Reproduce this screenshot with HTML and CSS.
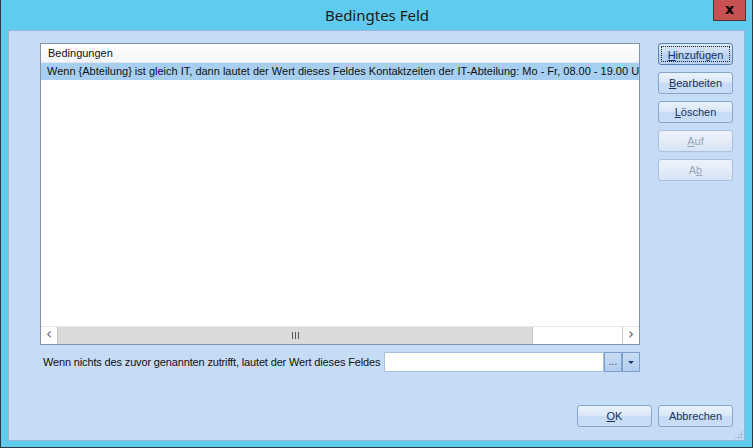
FILE: index.html
```html
<!DOCTYPE html>
<html lang="de">
<head>
  <meta charset="UTF-8">
  <title>Bedingtes Feld</title>
  <link rel="stylesheet" href="styles.css">
</head>
<body>
  <div class="window">
    <div class="titlebar">
      <span></span>
      <span class="title">Bedingtes Feld</span>
      <button class="close">x</button>
    </div>

    <div class="client">
      <div class="main">
        <div class="left">
          <div class="list">
            <div class="list-head">Bedingungen</div>
            <div class="list-row selected">Wenn {Abteilung} ist gleich IT, dann lautet der Wert dieses Feldes Kontaktzeiten der IT-Abteilung: Mo - Fr, 08.00 - 19.00 Uhr</div>
            <div class="list-body"></div>
            <div class="hscroll">
              <div class="arrow">&lsaquo;</div>
              <div class="thumb"><span class="grip"></span></div>
              <div class="track"></div>
              <div class="arrow right">&rsaquo;</div>
            </div>
          </div>

          <div class="field-row">
            <label class="field-label">Wenn nichts des zuvor genannten zutrifft, lautet der Wert dieses Feldes</label>
            <input type="text" class="field-input">
            <button class="mini">...</button>
            <button class="mini"><span class="caret"></span></button>
          </div>
        </div>

        <div class="side">
          <button class="btn default"><span class="focus"><u>H</u>inzufügen</span></button>
          <button class="btn"><u>B</u>earbeiten</button>
          <button class="btn"><u>L</u>öschen</button>
          <button class="btn" disabled><u>A</u>uf</button>
          <button class="btn" disabled>A<u>b</u></button>
        </div>
      </div>

      <div class="footer">
        <button class="btn"><u>O</u>K</button>
        <button class="btn">Abbrechen</button>
      </div>

      <div class="sizegrip"></div>
    </div>
  </div>
</body>
</html>
```

FILE: styles.css
```css
body {
  margin: 0;
  background: #fff;
}

.window {
  width: 753px;
  height: 448px;
  box-sizing: border-box;
  display: flex;
  flex-direction: column;
  padding: 0 7px 6px 7px;
  background: #5fcbef;
  border: 1px solid #2c3a44;
  border-top: none;
}

.titlebar {
  height: 30px;
  display: grid;
  grid-template-columns: 1fr auto 1fr;
  align-items: start;
  margin-right: -1px;
}

.title {
  padding-top: 5px;
  font-family: "Noto Sans", sans-serif;
  font-size: 15px;
  color: #1a1a1a;
}

.close {
  justify-self: end;
  width: 33px;
  height: 21px;
  margin: 0;
  padding: 0 0 3px 0;
  border: 1px solid #4a3434;
  border-top: none;
  background: #c75050;
  color: #000;
  font-family: "DejaVu Sans", sans-serif;
  font-weight: bold;
  font-size: 14px;
}

.client {
  position: relative;
  flex: 1;
  display: flex;
  flex-direction: column;
  padding: 12px 11px 13px 31px;
  background: #c6dbf6;
  border: 1px solid #98b6d8;
  font-family: "Liberation Sans", Arial, sans-serif;
  font-size: 11px;
  color: #111;
}

.main {
  display: flex;
  gap: 18px;
}

.left {
  width: 600px;
}

.list {
  height: 302px;
  box-sizing: border-box;
  display: flex;
  flex-direction: column;
  border: 1px solid #8592a6;
  background: #fff;
}

.list-head {
  height: 19px;
  line-height: 18px;
  padding-left: 7px;
  box-sizing: border-box;
  background: linear-gradient(#ffffff, #f4f6f9);
  border-bottom: 1px solid #e3e6eb;
}

.list-row {
  height: 17px;
  line-height: 16px;
  padding-left: 6px;
  white-space: nowrap;
  overflow: hidden;
}

.list-row.selected {
  background: #a6cff1;
}

.list-body {
  flex: 1;
}

.hscroll {
  height: 17px;
  display: flex;
  background: #fff;
  border-top: 1px solid #e6e6e6;
}

.arrow {
  width: 16px;
  text-align: center;
  font-family: "DejaVu Sans", sans-serif;
  font-size: 15px;
  line-height: 14px;
  color: #606060;
}

.arrow.right {
  border-left: 1px solid #c9c9c9;
}

.thumb {
  width: 474px;
  display: flex;
  align-items: center;
  justify-content: center;
  background: #dadada;
  border: 1px solid #c4c4c4;
  border-top: none;
  border-bottom: none;
}

.grip {
  width: 7px;
  height: 7px;
  background: repeating-linear-gradient(90deg, #555 0 1px, transparent 1px 3px);
}

.track {
  flex: 1;
}

.field-row {
  margin-top: 7px;
  height: 20px;
  display: flex;
  align-items: center;
}

.field-label {
  flex: 1;
  min-width: 0;
  padding-left: 3px;
  white-space: nowrap;
  letter-spacing: -0.15px;
}

.field-input {
  flex: none;
  width: 220px;
  height: 20px;
  box-sizing: border-box;
  margin: 0;
  border: 1px solid #a9c1e0;
  background: #fff;
}

.mini {
  flex: none;
  width: 18px;
  height: 20px;
  margin: 0;
  padding: 0;
  box-sizing: border-box;
  border: 1px solid #7c9fcd;
  background: linear-gradient(#cadcf4, #b4cdee);
  color: #2a4f8f;
  font-family: "Liberation Sans", sans-serif;
  font-size: 10px;
  line-height: 24px;
  display: flex;
  align-items: center;
  justify-content: center;
}

.caret {
  width: 0;
  height: 0;
  border-left: 3px solid transparent;
  border-right: 3px solid transparent;
  border-top: 3px solid #1d3a70;
}

.side {
  width: 75px;
  display: flex;
  flex-direction: column;
  gap: 7px;
}

.btn {
  width: 75px;
  height: 22px;
  margin: 0;
  padding: 0;
  box-sizing: border-box;
  border: 1px solid #86a5cf;
  border-radius: 3px;
  background: linear-gradient(#eaf2fc 0%, #dbe8f9 45%, #c6dbf6 55%, #c9ddf7 100%);
  font-family: "Liberation Sans", Arial, sans-serif;
  font-size: 11px;
  color: #15325f;
}

.btn.default {
  border-color: #5d82b6;
  padding: 2px;
  background: linear-gradient(#dae8fa 0%, #c7dcf7 45%, #b5d0f3 55%, #bad3f3 100%);
}

.btn .focus {
  display: block;
  height: 100%;
  line-height: 16px;
  border: 1px dotted #222;
  box-sizing: border-box;
}

.btn:disabled {
  color: #98a6bb;
  border-color: #acc0db;
  background: linear-gradient(#edf3fb 0%, #e3ecf8 50%, #d6e4f6 100%);
}

.footer {
  margin-top: auto;
  display: flex;
  justify-content: flex-end;
  gap: 6px;
}

.sizegrip {
  position: absolute;
  right: 1px;
  bottom: 1px;
  width: 9px;
  height: 9px;
  background: radial-gradient(circle, #9bb1cc 0.8px, transparent 1.2px) 0 0 / 3px 3px;
  clip-path: polygon(100% 0, 100% 100%, 0 100%);
}
```
